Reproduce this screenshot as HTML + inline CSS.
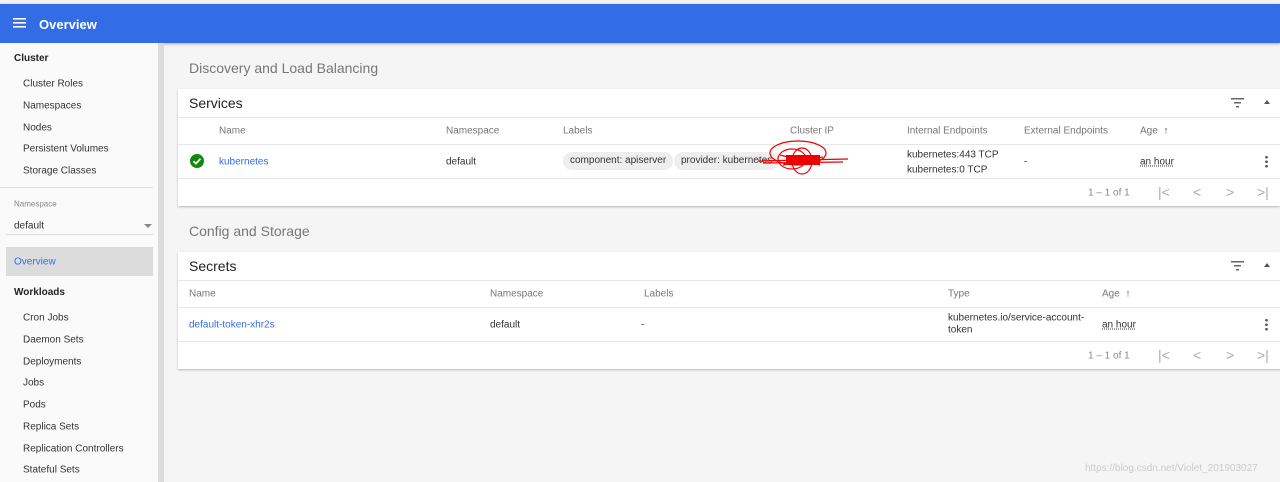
<!DOCTYPE html>
<html><head><meta charset="utf-8"><style>
*{margin:0;padding:0;box-sizing:border-box}
body{width:1280px;height:482px;overflow:hidden;background:#f5f5f5;font-family:"Liberation Sans",Arial,sans-serif;position:relative;color:#222}
.a{position:absolute;white-space:nowrap}
#top{position:absolute;left:0;top:0;width:1280px;height:4px;background:#f3f3f3}
#bar{position:absolute;left:0;top:4px;width:1280px;height:39px;background:#326de6;box-shadow:0 1px 3px rgba(0,0,0,.3)}
#side{position:absolute;left:0;top:43px;width:158px;height:439px;background:#fafafa}
#sb{position:absolute;left:158px;top:43px;width:6px;height:439px;background:#dcdcdc}
.s{font-size:10px;color:#333;transform:translateY(calc(-50% + 1px))}
.sb{font-weight:bold;font-size:10px;color:#222}
.card{position:absolute;left:178px;width:1102px;background:#fff;box-shadow:0 1px 2px rgba(0,0,0,.25)}
.h{font-size:10px;color:#777;transform:translateY(calc(-50% + 1px))}
.c{font-size:10px;color:#333;transform:translateY(calc(-50% + 1px))}
.l{color:#326de6}
.line{position:absolute;left:0;width:100%;height:1px;background:#e6e6e6}
.chip{position:absolute;background:#eee;border-radius:10px;height:18px;font-size:10px;line-height:18px;padding:0 7px;color:#333}
.pg{font-size:14px;color:#aaa;transform:translateY(-50%)}
</style></head><body>
<div id="top"></div>
<div id="bar">
<svg class="a" style="left:13px;top:13px" width="14" height="12"><rect y="1" width="13" height="1.6" fill="#fff"/><rect y="5" width="13" height="1.6" fill="#fff"/><rect y="9" width="13" height="1.6" fill="#fff"/></svg>
<div class="a" style="left:39px;top:13px;color:#fff;font-size:13px;font-weight:bold">Overview</div>
</div>
<div id="side">
<div class="a sb" style="left:14px;top:10px">Cluster</div>
<div class="a s" style="left:23px;top:40px">Cluster Roles</div>
<div class="a s" style="left:23px;top:62px">Namespaces</div>
<div class="a s" style="left:23px;top:84px">Nodes</div>
<div class="a s" style="left:23px;top:105px">Persistent Volumes</div>
<div class="a s" style="left:23px;top:127px">Storage Classes</div>
<div class="a" style="left:0;top:144px;width:153px;height:1px;background:#e0e0e0"></div>
<div class="a s" style="left:14px;top:160px;font-size:8px;color:#888">Namespace</div>
<div class="a s" style="left:14px;top:182px">default</div>
<div class="a" style="left:144px;top:181px;border-left:4px solid transparent;border-right:4px solid transparent;border-top:4px solid #888"></div>
<div class="a" style="left:6px;top:191px;width:147px;height:1px;background:#ddd"></div>
<div class="a" style="left:6px;top:204px;width:147px;height:29px;background:#dcdcdc"></div>
<div class="a s" style="left:14px;top:218px;color:#326de6">Overview</div>
<div class="a sb" style="left:14px;top:244px">Workloads</div>
<div class="a s" style="left:23px;top:274px">Cron Jobs</div>
<div class="a s" style="left:23px;top:296px">Daemon Sets</div>
<div class="a s" style="left:23px;top:318px">Deployments</div>
<div class="a s" style="left:23px;top:339px">Jobs</div>
<div class="a s" style="left:23px;top:361px">Pods</div>
<div class="a s" style="left:23px;top:383px">Replica Sets</div>
<div class="a s" style="left:23px;top:405px">Replication Controllers</div>
<div class="a s" style="left:23px;top:426px">Stateful Sets</div>
</div>
<div id="sb"></div>

<div class="a" style="left:189px;top:60px;font-size:14px;color:#777">Discovery and Load Balancing</div>
<div class="card" style="top:89px;height:117px">
<div class="a" style="left:11px;top:6px;font-size:14px;color:#222">Services</div>
<svg class="a" style="left:1053px;top:9px" width="14" height="10"><rect y="0" width="13" height="1.5" fill="#666"/><rect x="3" y="4" width="7" height="1.5" fill="#666"/><rect x="5" y="8" width="3" height="1.5" fill="#666"/></svg>
<div class="a" style="left:1086px;top:11px;border-left:3px solid transparent;border-right:3px solid transparent;border-bottom:4px solid #555"></div>
<div class="line" style="top:28px"></div>
<div class="a h" style="left:41px;top:41px">Name</div>
<div class="a h" style="left:268px;top:41px">Namespace</div>
<div class="a h" style="left:385px;top:41px">Labels</div>
<div class="a h" style="left:612px;top:41px">Cluster IP</div>
<div class="a h" style="left:729px;top:41px">Internal Endpoints</div>
<div class="a h" style="left:846px;top:41px">External Endpoints</div>
<div class="a h" style="left:962px;top:41px">Age &nbsp;<b style="color:#555">↑</b></div>
<div class="line" style="top:55px"></div>
<svg class="a" style="left:12px;top:65px" width="14" height="14"><circle cx="7" cy="7" r="7" fill="#0f8a0f"/><path d="M3.5 7.2l2.4 2.4 4.6-4.8" stroke="#fff" stroke-width="1.8" fill="none"/></svg>
<div class="a c l" style="left:41px;top:72px">kubernetes</div>
<div class="a c" style="left:268px;top:72px">default</div>
<div class="chip" style="left:385px;top:63px">component: apiserver</div>
<div class="chip" style="left:496px;top:63px">provider: kubernetes</div>
<svg class="a" style="left:580px;top:46px" width="100" height="50"><g stroke="#e00" fill="none" stroke-width="1.2"><ellipse cx="40" cy="18" rx="28" ry="12"/><ellipse cx="34" cy="24" rx="14" ry="10"/><ellipse cx="44" cy="26" rx="10" ry="13"/><path d="M0 26L90 24M5 28L85 27M22 20l40 10M25 30l40-8"/></g><rect x="28" y="20" width="34" height="10" fill="#e00"/></svg>
<div class="a c" style="left:729px;top:65px">kubernetes:443 TCP</div>
<div class="a c" style="left:729px;top:80px">kubernetes:0 TCP</div>
<div class="a c" style="left:846px;top:72px">-</div>
<div class="a c" style="left:962px;top:72px;text-decoration:underline dotted">an hour</div>
<div class="a" style="left:1087px;top:66px;width:3px;height:13px;background:radial-gradient(circle,#555 1.2px,transparent 1.5px) 0 0/3px 4.5px"></div>
<div class="line" style="top:89px"></div>
<div class="a c" style="left:910px;top:103px;color:#888">1 – 1 of 1</div>
<div class="a pg" style="left:980px;top:103px">|&lt;</div>
<div class="a pg" style="left:1015px;top:103px">&lt;</div>
<div class="a pg" style="left:1048px;top:103px">&gt;</div>
<div class="a pg" style="left:1079px;top:103px">&gt;|</div>
</div>

<div class="a" style="left:189px;top:223px;font-size:14px;color:#777">Config and Storage</div>
<div class="card" style="top:252px;height:117px">
<div class="a" style="left:11px;top:6px;font-size:14px;color:#222">Secrets</div>
<svg class="a" style="left:1053px;top:9px" width="14" height="10"><rect y="0" width="13" height="1.5" fill="#666"/><rect x="3" y="4" width="7" height="1.5" fill="#666"/><rect x="5" y="8" width="3" height="1.5" fill="#666"/></svg>
<div class="a" style="left:1086px;top:11px;border-left:3px solid transparent;border-right:3px solid transparent;border-bottom:4px solid #555"></div>
<div class="line" style="top:28px"></div>
<div class="a h" style="left:11px;top:41px">Name</div>
<div class="a h" style="left:312px;top:41px">Namespace</div>
<div class="a h" style="left:466px;top:41px">Labels</div>
<div class="a h" style="left:770px;top:41px">Type</div>
<div class="a h" style="left:924px;top:41px">Age &nbsp;<b style="color:#555">↑</b></div>
<div class="line" style="top:55px"></div>
<div class="a c l" style="left:11px;top:72px">default-token-xhr2s</div>
<div class="a c" style="left:312px;top:72px">default</div>
<div class="a c" style="left:463px;top:72px">-</div>
<div class="a c" style="left:770px;top:65px">kubernetes.io/service-account-</div>
<div class="a c" style="left:770px;top:77px">token</div>
<div class="a c" style="left:924px;top:72px;text-decoration:underline dotted">an hour</div>
<div class="a" style="left:1087px;top:66px;width:3px;height:13px;background:radial-gradient(circle,#555 1.2px,transparent 1.5px) 0 0/3px 4.5px"></div>
<div class="line" style="top:89px"></div>
<div class="a c" style="left:910px;top:103px;color:#888">1 – 1 of 1</div>
<div class="a pg" style="left:980px;top:103px">|&lt;</div>
<div class="a pg" style="left:1015px;top:103px">&lt;</div>
<div class="a pg" style="left:1048px;top:103px">&gt;</div>
<div class="a pg" style="left:1079px;top:103px">&gt;|</div>
</div>
<div class="a" style="left:1085px;top:463px;font-size:10px;color:#ccc">https://blog.csdn.net/Violet_201903027</div>
</body></html>
